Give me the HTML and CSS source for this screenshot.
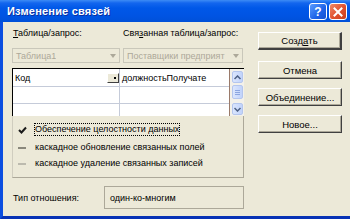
FILE: index.html
```html
<!DOCTYPE html>
<html>
<head>
<meta charset="utf-8">
<link rel="stylesheet" href="styles.css">
</head>
<body>
<div class="win">
  <div class="title">
    <span class="title-text">Изменение связей</span>
    <div class="tbtns">
      <span class="tb help">?</span>
      <span class="tb close"><svg width="10" height="10" viewBox="0 0 10 10"><path d="M1.5 1.5 L8.5 8.5 M8.5 1.5 L1.5 8.5" stroke="#fff" stroke-width="2" stroke-linecap="square"/></svg></span>
    </div>
  </div>
  <div class="frame">
    <div class="left">
      <div class="labels">
        <span class="lab1"><u>Т</u>аблица/запрос:</span>
        <span class="lab2">Свя<u>з</u>анная таблица/запрос:</span>
      </div>
      <div class="combos">
        <div class="combo c1"><span class="ctext">Таблица1</span><span class="carrow"></span></div>
        <div class="combo c2"><span class="ctext">Поставщики предприят</span><span class="carrow"></span></div>
      </div>
      <div class="grid">
        <div class="cols">
          <div class="row">
            <div class="cell a">Код<span class="ddbtn"></span></div>
            <div class="cell b">должностьПолучате</div>
          </div>
          <div class="row"><div class="cell a"></div><div class="cell b"></div></div>
          <div class="row last"><div class="cell a"></div><div class="cell b"></div></div>
        </div>
        <div class="sbar">
          <div class="sbtn up"><svg width="7" height="5" viewBox="0 0 7 5"><path d="M0.5 4 L3.5 1 L6.5 4" fill="none" stroke="#4d6185" stroke-width="1.5"/></svg></div>
          <div class="thumb"><span></span><span></span><span></span></div>
          <div class="sbtn down"><svg width="7" height="5" viewBox="0 0 7 5"><path d="M0.5 1 L3.5 4 L6.5 1" fill="none" stroke="#4d6185" stroke-width="1.5"/></svg></div>
        </div>
      </div>
      <div class="checks">
        <div class="chk"><span class="mark on"><svg width="9" height="8" viewBox="0 0 9 8"><path d="M1 4 L3.5 6.5 L8 1.5" fill="none" stroke="#1a1a1a" stroke-width="2"/></svg></span><span class="ctxt focus">Обеспечение целостности данных</span></div>
        <div class="chk"><span class="mark dash"></span><span class="ctxt">каскадное обновление связанных полей</span></div>
        <div class="chk"><span class="mark dash light"></span><span class="ctxt">каскадное удаление связанных записей</span></div>
      </div>
      <div class="rel">
        <span class="rel-label">Тип отношения:</span>
        <div class="rel-box">один-ко-многим</div>
      </div>
    </div>
    <div class="buttons">
      <div class="btn default">Созд<u>а</u>ть</div>
      <div class="btn">Отмена</div>
      <div class="btn">Объединение...</div>
      <div class="btn">Новое...</div>
    </div>
  </div>
</div>
</body>
</html>
```

FILE: styles.css
```css
html, body {
  margin: 0;
  padding: 0;
  width: 350px;
  height: 219px;
  overflow: hidden;
  background: #ece9d8;
}

.win {
  width: 350px;
  height: 219px;
  display: flex;
  flex-direction: column;
  font-family: "Liberation Sans", Arial, sans-serif;
  font-size: 9px;
  color: #000;
}

.title {
  height: 22px;
  flex: none;
  display: flex;
  align-items: center;
  justify-content: space-between;
  background: linear-gradient(to bottom, #3d8cf5 0px, #1366ee 3px, #0058e8 8px, #0054e3 16px, #0050d8 22px);
  padding-left: 7px;
  box-sizing: border-box;
}

.title-text {
  color: #fff;
  font-weight: bold;
  font-size: 11px;
  text-shadow: 1px 1px 0 #0a2fa0;
  letter-spacing: 0.2px;
}

.tbtns {
  display: flex;
  gap: 2px;
  margin-right: 3px;
  align-self: flex-start;
  margin-top: 3px;
}

.tb {
  width: 16px;
  height: 15px;
  border: 1px solid #fff;
  border-radius: 3px;
  display: flex;
  align-items: center;
  justify-content: center;
  color: #fff;
  font-weight: bold;
  font-size: 12px;
}

.help {
  background: linear-gradient(135deg, #5a9cff, #1d62e8 60%, #1550d0);
}

.close {
  background: linear-gradient(135deg, #f08a6a, #e0502e 55%, #c8401f);
}

.frame {
  flex: 1;
  display: flex;
  border-left: 3px solid #0b4ee0;
  border-bottom: 3px solid #0732b5;
  padding-left: 9px;
  gap: 14px;
  min-height: 0;
}

.left {
  width: 232px;
  display: flex;
  flex-direction: column;
  padding-top: 6px;
}

.labels {
  display: flex;
  height: 11px;
  line-height: 11px;
  color: #000;
}

.lab1 {
  width: 110px;
  padding-left: 1px;
}

.combos {
  display: flex;
  gap: 3px;
  margin-top: 9px;
}

.combo {
  height: 15px;
  box-sizing: border-box;
  border: 1px solid #c9c7ba;
  display: flex;
  align-items: center;
  justify-content: space-between;
  color: #aca899;
  background: #ece9d8;
}

.c1 { width: 108px; }
.c2 { width: 120px; }

.ctext {
  padding-left: 3px;
  white-space: nowrap;
  overflow: hidden;
}

.carrow {
  width: 0;
  height: 0;
  border-left: 3.5px solid transparent;
  border-right: 3.5px solid transparent;
  border-top: 4px solid #aca899;
  margin-right: 3px;
}

.grid {
  margin-top: 5px;
  height: 48px;
  box-sizing: border-box;
  border-top: 1px solid #000;
  border-left: 1px solid #000;
  display: flex;
  background: #fff;
}

.cols {
  flex: 1;
  display: flex;
  flex-direction: column;
}

.row {
  display: flex;
  height: 17px;
  box-sizing: border-box;
  border-bottom: 1px solid #c5cbd9;
}

.row:first-child { height: 18px; }
.row.last { height: 12px; border-bottom: none; }

.cell {
  box-sizing: border-box;
  display: flex;
  align-items: center;
  white-space: nowrap;
  overflow: hidden;
}

.cell.a {
  width: 107px;
  border-right: 1px solid #c5cbd9;
  padding-left: 2px;
  justify-content: space-between;
}

.cell.b {
  flex: 1;
  padding-left: 2px;
}

.ddbtn {
  width: 12px;
  height: 10px;
  box-sizing: border-box;
  background: #ece9d8;
  border-top: 1px solid #fff;
  border-left: 1px solid #fff;
  border-right: 1px solid #404040;
  border-bottom: 1px solid #404040;
  margin-right: 0;
  position: relative;
}

.ddbtn::after {
  content: "";
  position: absolute;
  left: 6px;
  top: 3px;
  width: 2px;
  height: 2px;
  background: #000;
}

.sbar {
  width: 15px;
  box-sizing: border-box;
  border-left: 1px solid #9a7a6a;
  background: #f3f1ea;
  display: flex;
  flex-direction: column;
  align-items: center;
  padding: 2px 0 1px;
  gap: 2px;
}

.sbtn, .thumb {
  width: 11px;
  box-sizing: border-box;
  border: 1px solid #b4c6ee;
  border-radius: 2px;
  background: linear-gradient(to right, #dbe6fd, #c1d3fb);
  display: flex;
  align-items: center;
  justify-content: center;
}

.sbtn { height: 12px; }

.thumb {
  height: 14px;
  flex-direction: column;
  gap: 1px;
  margin-top: 0;
}

.thumb span {
  width: 5px;
  height: 1px;
  background: #8ca6e0;
}

.sbtn.down { margin-top: auto; }

.checks {
  height: 62px;
  box-sizing: border-box;
  border-left: 1px solid #d0cdbf;
  border-right: 1px solid #aca899;
  border-bottom: 1px solid #aca899;
  display: flex;
  flex-direction: column;
  padding-top: 8px;
  gap: 5px;
}

.chk {
  display: flex;
  align-items: center;
  height: 11px;
  line-height: 11px;
  padding-left: 5px;
}

.mark {
  width: 9px;
  height: 8px;
  display: flex;
  align-items: center;
  margin-right: 8px;
}

.mark.dash::before {
  content: "";
  width: 8px;
  height: 2px;
  background: #8a887c;
}

.mark.dash.light::before {
  background: #bcbaae;
}

.ctxt {
  white-space: nowrap;
}

.ctxt.focus {
  outline: 1px dotted #000;
  outline-offset: 0;
}

.chk:nth-child(2) { margin-top: 2px; }

.rel {
  margin-top: 8px;
  display: flex;
  align-items: center;
}

.rel-label {
  width: 91px;
  padding-left: 1px;
}

.rel-box {
  flex: 1;
  height: 23px;
  box-sizing: border-box;
  border: 1px solid #aca899;
  display: flex;
  align-items: center;
  padding-left: 5px;
}

.buttons {
  width: 84px;
  display: flex;
  flex-direction: column;
  padding-top: 10px;
  gap: 9px;
}

.btn {
  height: 18px;
  box-sizing: border-box;
  border-top: 1px solid #fff;
  border-left: 1px solid #fff;
  border-right: 1px solid #404040;
  border-bottom: 1px solid #404040;
  box-shadow: inset -1px -1px 0 #aca899;
  display: flex;
  align-items: center;
  justify-content: center;
  font-size: 9.5px;
}

.btn.default {
  border-right: 2px solid #404040;
  border-bottom: 2px solid #404040;
  margin-bottom: 2px;
}
```
